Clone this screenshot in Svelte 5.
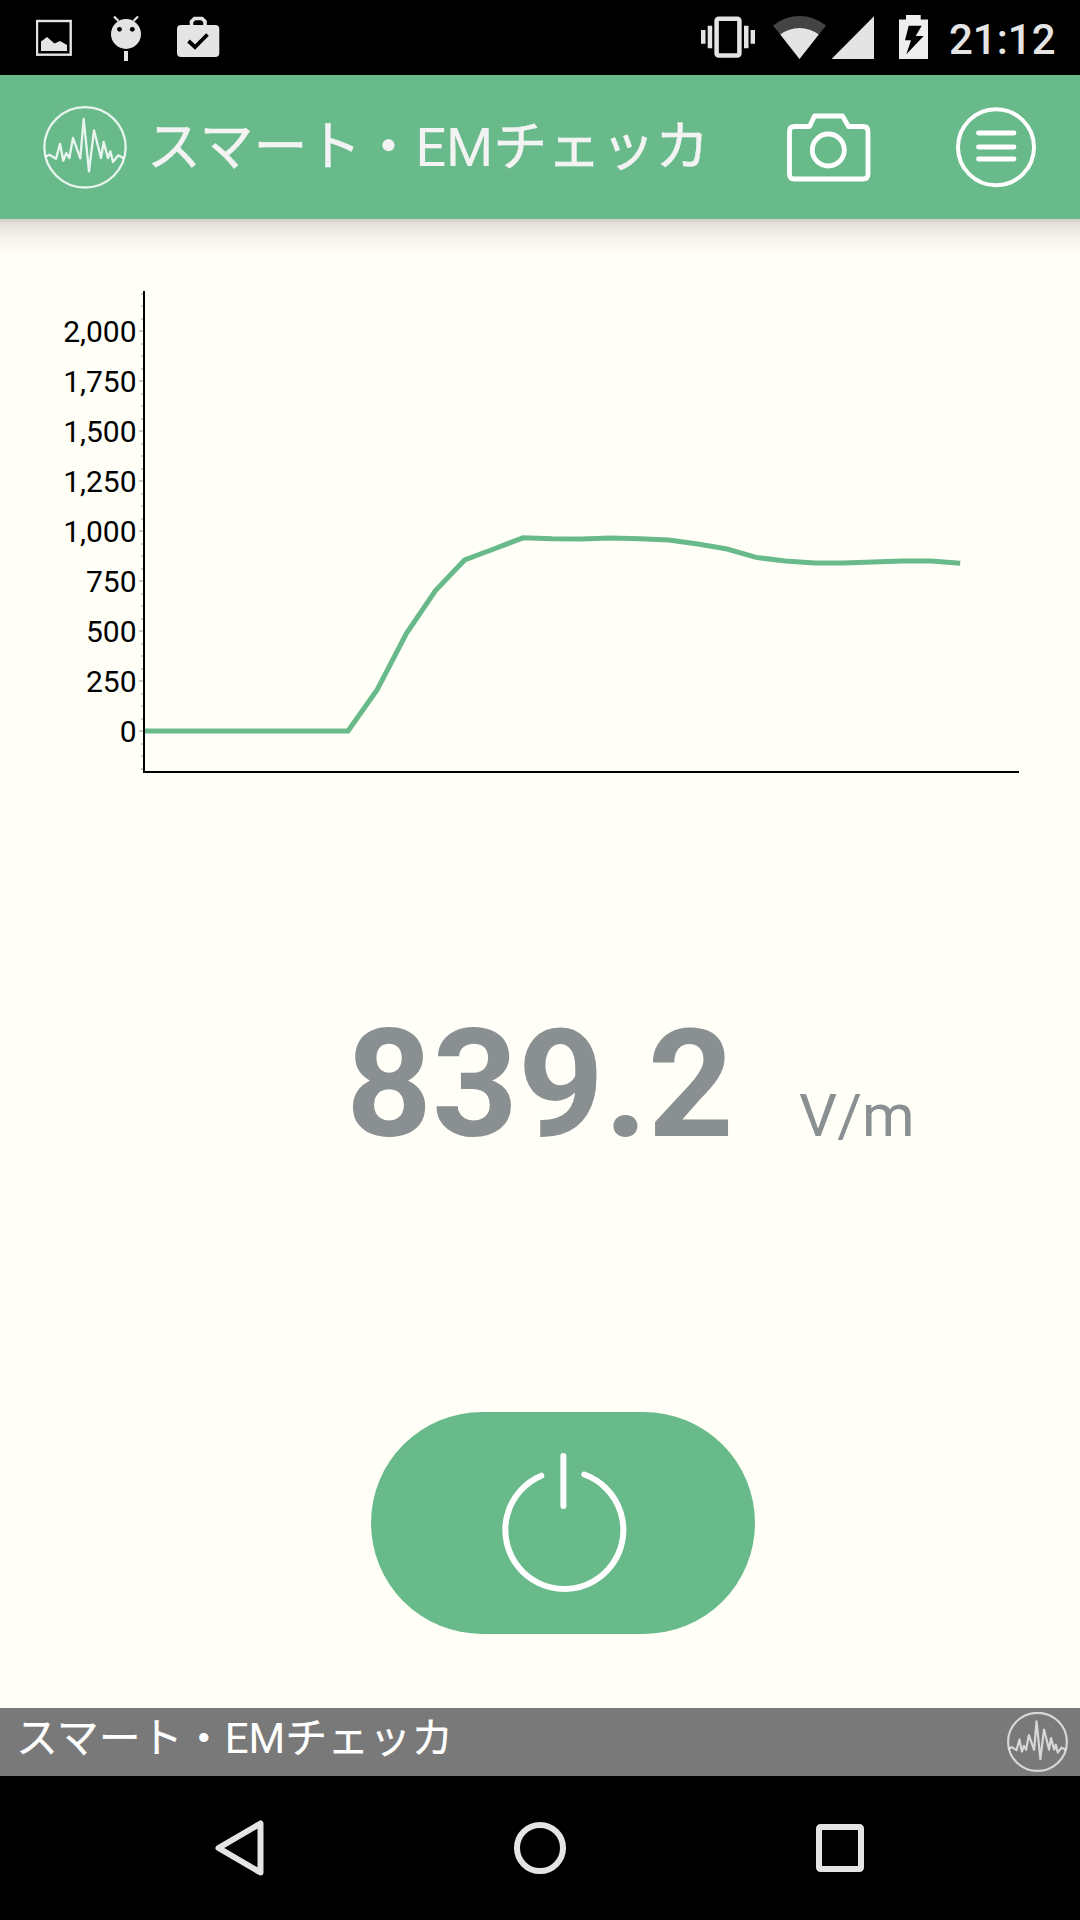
<script lang="ts">
	const title: string[] = ['スマート・', 'EM', 'チェッカ'];
	const time: string = '21:12';
	let reading = $state(839.2);
	let running = $state(true);

	// last samples in V/m, one slot per 1/30 of the plot width
	const samples: number[] = [
		0, 0, 0, 0, 0, 0, 0, 0, 207, 487, 702, 855, 910, 966, 961, 960, 965, 961, 955, 935, 910, 868,
		850, 840, 840, 845, 850, 850, 839.2
	];

	const left = 144;
	const right = 1018.5;
	const zero = 512;
	const step = (right - left) / 30;
	const toY = (v: number) => zero - v * 0.2;

	const points = samples.map((v, i) => `${left + i * step},${toY(v)}`).join(' ');
	const labels: number[] = [2000, 1750, 1500, 1250, 1000, 750, 500, 250, 0];
	// minor ticks run a little past both ends of the scale
	const ticks = Array.from({ length: 39 }, (_, i) => -187.5 + i * 62.5);
</script>

{#snippet logo()}
	<svg class="logo" viewBox="41 34 252 249">
		<ellipse cx="167" cy="158" rx="122" ry="120.5" />
		<path d="M47 187L60 180L80 192L92 148L102 198L111 175L120 190L131 130L153 191L163 73L179 230L194 107L215 190L223 142L236 190L243 170L251 202L267 182L285 192" />
	</svg>
{/snippet}

{#snippet name()}
	<span class="kana">{title[0]}</span><span>{title[1]}</span><span class="kana">{title[2]}</span>
{/snippet}

<div class="screen">
	<div class="status">
		<svg width="36" height="75" viewBox="36 0 36 75">
			<rect x="37" y="21" width="33.7" height="33.7" fill="none" stroke="#e4e4e4" stroke-width="2.4" />
			<path d="M41 41.5L47 37L54.500 43.500L60 41L67 45V51H41Z" />
		</svg>
		<svg class="android" width="32" height="75" viewBox="110 0 32 75">
			<circle cx="126" cy="34" r="15" />
			<path d="M114 16.500L118.500 21M138 16.500L133.500 21" stroke="#e4e4e4" stroke-width="2.2" />
			<circle cx="119.500" cy="29.300" r="2.400" fill="#000" />
			<circle cx="132.300" cy="29.300" r="2.400" fill="#000" />
			<rect x="124" y="51" width="4" height="10" />
		</svg>
		<svg class="bag" width="43" height="75" viewBox="177 0 43 75">
			<rect x="177" y="25" width="42.300" height="32" rx="4" />
			<path d="M191.500 26V21.500L194.500 18.500H202L205 21.500V26" fill="none" stroke="#e4e4e4" stroke-width="3.6" />
			<path d="M188.500 41L195 47L207.500 34.500" fill="none" stroke="#000" stroke-width="3.8" />
		</svg>
		<div class="space"></div>
		<svg width="54" height="75" viewBox="701 0 54 75">
			<rect x="716.600" y="18.800" width="22.800" height="36.700" rx="2" fill="none" stroke="#e4e4e4" stroke-width="4.5" />
			<path d="M701 30h4.500v13.700h-4.500zM707.700 25.700h4.500v22.600h-4.500zM744 25.700h4.500v22.600h-4.500zM750.600 30h4.500v13.700h-4.500z" />
		</svg>
		<svg class="wifi" width="55" height="75" viewBox="772 0 55 75">
			<path d="M799.500 59L773 25.500Q785 16 799.500 16T826 25.500Z" fill="#444" />
			<path d="M799.500 59L780.300 34.500Q789 28 799.500 28T818.700 34.500Z" />
		</svg>
		<svg class="signal" width="43" height="75" viewBox="831 0 43 75">
			<path d="M831.500 59H874V16.300Z" />
		</svg>
		<svg class="battery" width="29" height="75" viewBox="899 0 29 75">
			<path d="M899 59V19.500H906V15H920.700V19.500H928V59Z" fill="#eee" />
			<path d="M908.700 25.700H921.700L915.700 36H923.700L906.300 54.300L911 40.300H905Z" fill="#000" />
		</svg>
		<span class="time">{time}</span>
	</div>

	<header>
		{@render logo()}
		<h1>{@render name()}</h1>
		<button class="icon" aria-label="camera">
			<svg width="84" height="70" viewBox="787 112 84 70">
				<path d="M794.500 126.500H809.500L814.500 116H842.500L848.500 126.500H863Q868 126.500 868 131.500V174Q868 179 863 179H794.500Q789.500 179 789.500 174V131.500Q789.500 126.500 794.500 126.500Z" />
				<circle cx="828.300" cy="150" r="16" />
			</svg>
		</button>
		<button class="icon menu" aria-label="menu">
			<svg width="82" height="82" viewBox="955.500 106.700 82 82">
				<circle cx="996.500" cy="147.900" r="38" stroke-width="4" />
				<path d="M979 133.700H1014.500M979 147.700H1014.500M979 159.700H1014.500" />
			</svg>
		</button>
	</header>

	<main>
		<div class="shade"></div>
		<svg class="chart" width="1080" height="560" viewBox="0 0 1080 560">
			{#each ticks as t, i}
				<line class="tick" x1={(i + 1) % 4 === 0 ? 139 : 141} x2="143" y1={Math.round(toY(t))} y2={Math.round(toY(t))} />
			{/each}
			{#each labels as l}
				<text x="136.5" y={toY(l) + 10.5}>{l.toLocaleString('en-US')}</text>
			{/each}
			<polyline {points} />
			<path class="axis" d="M144 72V553H1019" />
		</svg>

		<div class="reading">
			<span class="value">{reading.toFixed(1)}</span>
			<span class="unit">V/m</span>
		</div>

		<button class="power" aria-label="power" onclick={() => (running = !running)}>
			<svg width="384" height="222" viewBox="371 1412 384 222">
				<path d="M541.300 1475.700A59 59 0 1 0 584.300 1474.500" />
				<path d="M563.400 1456V1506" />
			</svg>
		</button>
	</main>

	<footer>
		<div class="name">{@render name()}</div>
		{@render logo()}
	</footer>

	<nav>
		<svg viewBox="0 0 60 60"><path d="M8.500 30L50.500 5.500V54.500Z" /></svg>
		<svg viewBox="0 0 60 60"><circle cx="30" cy="30" r="23" /></svg>
		<svg viewBox="0 0 60 60"><rect x="9" y="9" width="42" height="42" rx="1.500" /></svg>
	</nav>
</div>

<style>
:global(body) {
	margin: 0;
	background: #000;
}

.screen {
	display: flex;
	flex-direction: column;
	width: 1080px;
	height: 1920px;
	overflow: hidden;
	background: #fffff7;
	font-family: Roboto, "Noto Sans CJK JP", sans-serif;
}

svg {
	display: block;
	flex: none;
}

button {
	padding: 0;
	border: none;
	background: none;
}

.status {
	display: flex;
	height: 75px;
	padding: 0 23px 0 36px;
	background: #000;
	fill: #e4e4e4;
}
.android { margin-left: 38px; }
.bag { margin-left: 35px; }
.space { flex: 1; }
.wifi { margin-left: 17px; }
.signal { margin-left: 4px; }
.battery { margin-left: 25px; }
.time {
	width: 108px;
	margin-left: 21px;
	color: #e4e4e4;
	font-size: 42px;
	font-weight: 500;
	line-height: 79px;
	white-space: nowrap;
}

header {
	display: flex;
	align-items: center;
	height: 144px;
	padding: 0 43px;
	box-sizing: border-box;
	background: #69ba8b;
}
.logo {
	width: 84px;
	height: 83px;
	fill: none;
	stroke: #fff;
	stroke-width: 7;
	stroke-linejoin: round;
	stroke-opacity: 0.85;
}
h1 {
	flex: 1;
	margin: 1px 0 0 20px;
	color: #f3f3f3;
	font-size: 54px;
	font-weight: 400;
	line-height: 80px;
	white-space: nowrap;
}
h1 .kana {
	-webkit-text-stroke: 0.5px;
}
.icon svg {
	fill: none;
	stroke: #fff;
	stroke-width: 4.8;
	stroke-linecap: round;
	stroke-linejoin: round;
}
.menu { margin-left: 84px; }

main {
	display: flex;
	flex-direction: column;
	height: 1489px;
}
.shade {
	height: 39px;
	margin-bottom: -39px;
	background: linear-gradient(#d6d4cd 3px, #e1e0d8 3px, #f0f0e8 16px, #fafaf2 28px, #fffff7);
}

.chart text {
	fill: #000;
	font-size: 30px;
	text-anchor: end;
}
.tick {
	stroke: #ccc;
	stroke-width: 2;
}
.axis {
	fill: none;
	stroke: #000;
	stroke-width: 2;
}
polyline {
	fill: none;
	stroke: #69ba8b;
	stroke-width: 5;
}

.reading {
	display: flex;
	align-items: baseline;
	margin-top: 218px;
	padding-left: 346px;
	color: #8a9092;
	line-height: 176px;
	white-space: nowrap;
}
.value {
	width: 453px;
	font-size: 150px;
	font-weight: 700;
}
.unit {
	font-size: 60px;
}

.power {
	width: 384px;
	height: 222px;
	margin: 208px 0 0 371px;
	border-radius: 111px;
	background: #69ba8b;
}
.power svg {
	fill: none;
	stroke: #fff;
	stroke-width: 6;
	stroke-linecap: round;
}

footer {
	display: flex;
	align-items: center;
	justify-content: space-between;
	height: 68px;
	padding: 0 12px 0 16px;
	background: #797979;
	color: #fff;
	font-size: 42px;
	line-height: 60px;
}
footer .name {
	margin-bottom: 6px;
}
footer .kana {
	-webkit-text-stroke: 0.2px;
}
footer .logo {
	width: 61px;
	height: 60px;
	stroke-width: 9;
	stroke-opacity: 0.7;
}

nav {
	display: flex;
	align-items: center;
	justify-content: center;
	gap: 240px;
	height: 144px;
	background: #000;
}
nav svg {
	width: 60px;
	height: 60px;
	fill: none;
	stroke: #e4e4e4;
	stroke-width: 6;
	stroke-linejoin: round;
}
</style>
